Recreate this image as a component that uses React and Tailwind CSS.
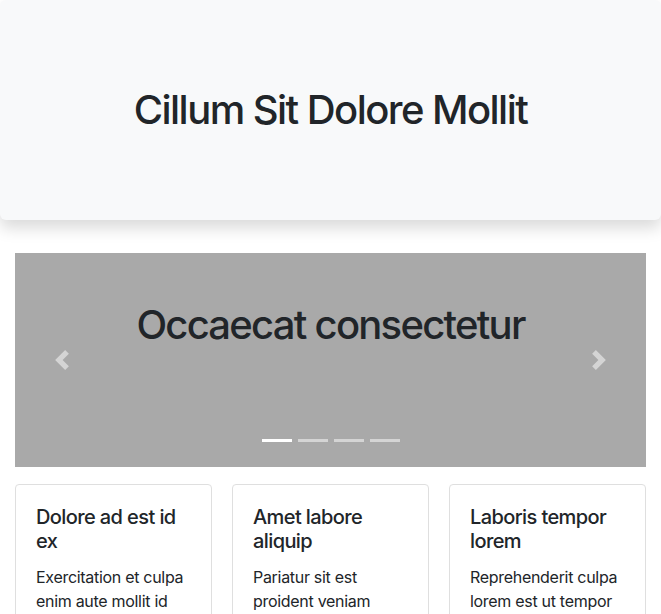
import React from "react";

const cards = [
  {
    title: "Dolore ad est id ex",
    text: "Exercitation et culpa enim aute mollit id",
  },
  {
    title: "Amet labore aliquip",
    text: "Pariatur sit est proident veniam",
  },
  {
    title: "Laboris tempor lorem",
    text: "Reprehenderit culpa lorem est ut tempor",
  },
];

const App = () => {
  return (
    <div className="min-h-screen bg-white text-[#212529] font-['Inter','Noto_Sans',sans-serif]">
      {/* Jumbotron header */}
      <header className="h-[220px] bg-[#f8f9fa] rounded-md shadow-[0_8px_16px_rgba(0,0,0,0.15)] flex items-center justify-center">
        <h1 className="text-[40px] leading-[1.2] font-medium tracking-[-1.55px]">
          Cillum Sit Dolore Mollit
        </h1>
      </header>

      {/* Carousel */}
      <div className="mx-[15px] mt-[33px] relative h-[214px] bg-[#a9a9a9] overflow-hidden">
        <div className="pt-12 text-center">
          <h2 className="text-[40px] leading-[1.2] font-medium tracking-[-1.75px]">
            Occaecat consectetur
          </h2>
        </div>

        <button className="absolute left-0 top-0 bottom-0 w-[15%] flex items-center justify-center opacity-50">
          <svg width="20" height="20" viewBox="0 0 8 8" fill="#fff">
            <path d="M5.25 0l-4 4 4 4 1.5-1.5L4.25 4l2.5-2.5L5.25 0z" />
          </svg>
        </button>
        <button className="absolute right-0 top-0 bottom-0 w-[15%] flex items-center justify-center opacity-50">
          <svg width="20" height="20" viewBox="0 0 8 8" fill="#fff">
            <path d="M2.75 0l-1.5 1.5L3.75 4l-2.5 2.5L2.75 8l4-4-4-4z" />
          </svg>
        </button>

        <div className="absolute left-0 right-0 bottom-[25px] flex justify-center gap-[6px]">
          <span className="w-[30px] h-[3px] bg-white" />
          <span className="w-[30px] h-[3px] bg-white opacity-50" />
          <span className="w-[30px] h-[3px] bg-white opacity-50" />
          <span className="w-[30px] h-[3px] bg-white opacity-50" />
        </div>
      </div>

      {/* Cards */}
      <div className="mx-[15px] mt-[17px] grid grid-cols-3 gap-5">
        {cards.map((card) => (
          <div
            key={card.title}
            className="border border-[#dfdfdf] rounded p-5"
          >
            <h5 className="text-[20px] leading-[1.2] font-medium mb-3 tracking-[-0.6px]">
              {card.title}
            </h5>
            <p className="text-base leading-6 tracking-[-0.3px]">{card.text}</p>
          </div>
        ))}
      </div>
    </div>
  );
};

export default App;
